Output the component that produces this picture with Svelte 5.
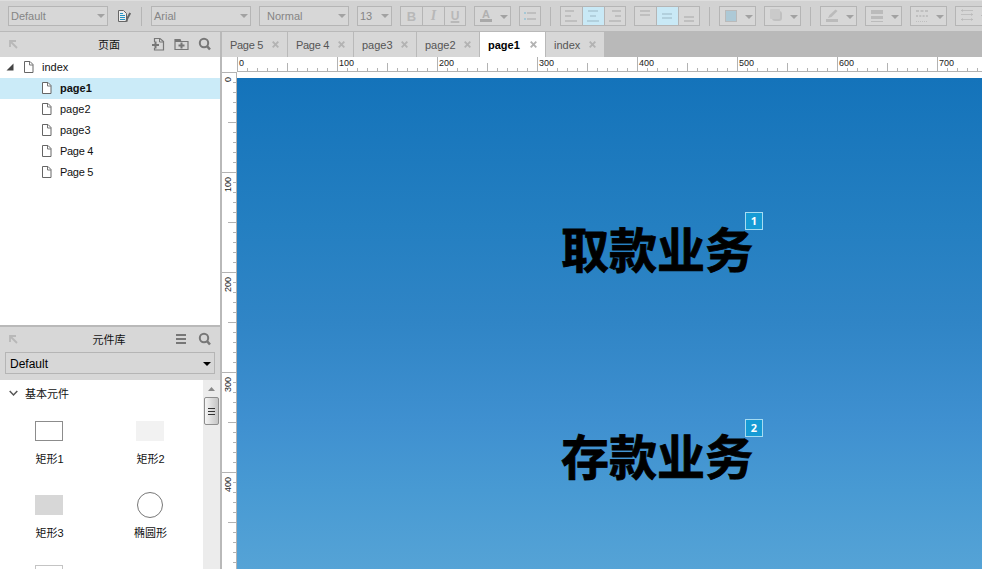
<script>
  const pages = ['page1', 'page2', 'page3', 'Page 4', 'Page 5'];
  const tabs = [
    { name: 'Page 5', width: 66 },
    { name: 'Page 4', width: 66 },
    { name: 'page3', width: 63 },
    { name: 'page2', width: 63 },
    { name: 'page1', width: 66, active: true },
    { name: 'index', width: 58 }
  ];
  const shapes = [
    { name: '矩形1', kind: 'outline' },
    { name: '矩形2', kind: 'light' },
    { name: '矩形3', kind: 'gray' },
    { name: '椭圆形', kind: 'circle' }
  ];
  const xTicks = Array.from({ length: 75 }, (_, i) => i);
  const yTicks = Array.from({ length: 50 }, (_, i) => i);
  const tickLength = (i) => (i % 10 === 0 ? 15 : i % 5 === 0 ? 9 : 4);
</script>

{#snippet pageIcon()}
  <svg class="file" width="10" height="12" viewBox="0 0 10 12">
    <path d="M.5 .5H6L9 3.5V11.5H.5Z" fill="#fff" stroke="#666" />
    <path d="M5.5 .5V4H9" fill="none" stroke="#777" />
  </svg>
{/snippet}

{#snippet search()}
  <svg width="14" height="14" viewBox="0 0 14 14">
    <circle cx="6" cy="6" r="4.2" fill="none" stroke="#777" stroke-width="2" />
    <path d="M9 9.2L12 12.5" stroke="#777" stroke-width="2.5" />
  </svg>
{/snippet}

{#snippet collapse()}
  <svg class="collapse" width="9" height="9" viewBox="0 0 9 9">
    <path d="M1 7V1H7M1.5 1.5L8 8" fill="none" stroke="#b8b8b8" stroke-width="1.8" />
  </svg>
{/snippet}

{#snippet arrow()}
  <svg class="arrow" width="8" height="4" viewBox="0 0 8 4"><path d="M0 0H8L4 4Z" /></svg>
{/snippet}

<div class="app">
  <div class="toolbar">
    <div class="box select w100">Default{@render arrow()}</div>
    <svg class="style-icon" width="15" height="14" viewBox="0 0 15 14">
      <path d="M1.500 1.500H6.5L9.5 4.500V12.5H1.500Z" fill="#eee" stroke="#666" />
      <path d="M3 4.5H6M3 6.5H8M3 8.5H8M3 10.5H8" stroke="#2494c4" />
      <path d="M13.200 4L10 10L9.500 12.5" fill="none" stroke="#666" stroke-width="2" />
    </svg>
    <i class="sep"></i>
    <div class="box select w100">Arial{@render arrow()}</div>
    <div class="box select w90">Normal{@render arrow()}</div>
    <div class="box select w35">13{@render arrow()}</div>
    <div class="box group letters">
      <span class="bold">B</span><span class="italic">I</span><span class="under">U</span>
    </div>
    <div class="box drop">
      <svg width="37" height="20">
        <text x="12" y="12" text-anchor="middle" font-size="11" font-weight="bold" fill="#b0b0b0">A</text>
        <path d="M6 13H18V16H6Z" class="dark" />
      </svg>
      {@render arrow()}
    </div>
    <div class="box w22">
      <svg width="22" height="20">
        <path d="M8 7H17M8 13H17" />
        <path d="M5 7H7M5 13H7" class="dots" />
      </svg>
    </div>
    <i class="sep"></i>
    <div class="box group">
      <span><svg width="21" height="18"><path d="M4 4H13M4 9H10M4 14H16" /></svg></span>
      <span class="on"><svg width="21" height="18"><path d="M5 4H15M7 9H13M4 14H16" /></svg></span>
      <span><svg width="20" height="18"><path d="M7 4H16M10 9H16M4 14H16" /></svg></span>
    </div>
    <div class="box group">
      <span><svg width="21" height="18"><path d="M5 4H15M5 8H15" /></svg></span>
      <span class="on"><svg width="21" height="18"><path d="M5 7H15M5 11H15" /></svg></span>
      <span><svg width="20" height="18"><path d="M5 10H15M5 14H15" /></svg></span>
    </div>
    <i class="sep"></i>
    <div class="box drop">
      <svg width="37" height="20"><rect x="6.500" y="4.500" width="11" height="11" fill="#adc9d6" stroke="#bababa" /></svg>
      {@render arrow()}
    </div>
    <div class="box drop">
      <svg width="37" height="20">
        <rect x="8" y="5" width="10" height="10" rx="3" fill="#c0c0c0" />
        <rect x="6" y="3" width="10" height="10" rx="1" fill="#cacaca" />
      </svg>
      {@render arrow()}
    </div>
    <i class="sep"></i>
    <div class="box drop">
      <svg width="37" height="20">
        <path d="M6 13H18V16H6Z" class="fill" />
        <path d="M8 12L9.500 9L15.500 3.500L17.500 5L11.500 11Z" class="fill" />
      </svg>
      {@render arrow()}
    </div>
    <div class="box drop">
      <svg width="37" height="20"><path d="M6 4H18V8H6ZM6 10H18V13H6ZM6 15H18V16H6Z" class="fill" /></svg>
      {@render arrow()}
    </div>
    <div class="box drop">
      <svg width="37" height="20">
        <path d="M6 5H18" stroke-dasharray="3 1.500" />
        <path d="M6 10H18" stroke-dasharray="2 1.300" />
        <path d="M6 15.500H18" class="thin" stroke-dasharray="1 1" />
      </svg>
      {@render arrow()}
    </div>
    <div class="box drop">
      <svg width="37" height="20">
        <path d="M6 4.500H18M6 8.500H18M6 13.500H18" class="thin" />
        <path d="M6 4.500L8 3V6ZM18 8.500L16 7V10ZM6 13.500L8 12V15ZM18 13.500L16 12V15Z" class="fill" />
      </svg>
      {@render arrow()}
    </div>
  </div>

  <div class="body">
    <aside>
      <header>
        {@render collapse()}
        <span>页面</span>
        <div class="tools">
          <svg width="14" height="14" viewBox="0 0 14 14">
            <path d="M3.500 5V1.500H9L12.500 4.500V13H3.500V11" fill="none" stroke="#777" stroke-width="1.200" />
            <path d="M8.500 1.500V5H12" fill="none" stroke="#777" />
            <path d="M1 8H8M4.500 4.500V11.500" fill="none" stroke="#777" stroke-width="2" />
          </svg>
          <svg width="15" height="14" viewBox="0 0 15 14">
            <path d="M1 12.500V2.500H6L7 4.500H14V12.500Z" fill="none" stroke="#777" stroke-width="1.200" />
            <path d="M1 2H6L7.500 5H1Z" fill="#777" />
            <path d="M4.500 8.500H10.500M7.500 5.500V11.500" stroke="#777" stroke-width="2" />
          </svg>
          {@render search()}
        </div>
      </header>
      <div class="tree">
        <div class="row root">
          <svg class="twist" width="8" height="8" viewBox="0 0 8 8"><path d="M7.500 .5V7.500H.5Z" fill="#444" /></svg>
          {@render pageIcon()}
          <span>index</span>
        </div>
        {#each pages as page}
          <div class="row" class:selected={page === 'page1'}>
            {@render pageIcon()}
            <span class:tight={page.startsWith('P')}>{page}</span>
          </div>
        {/each}
      </div>
      <section class="library">
        <header>
          {@render collapse()}
          <span>元件库</span>
          <div class="tools menu">
            <svg width="12" height="14" viewBox="0 0 12 14"><path d="M1 3H11M1 7H11M1 11H11" stroke="#777" stroke-width="2" /></svg>
            {@render search()}
          </div>
        </header>
        <div class="picker">
          Default
          <svg width="8" height="4" viewBox="0 0 8 4"><path d="M0 0H8L4 4Z" fill="#000" /></svg>
        </div>
        <div class="widgets">
          <div class="content">
            <h3>
              <svg width="9" height="7" viewBox="0 0 9 7"><path d="M.7 1L4.500 5L8.300 1" fill="none" stroke="#555" stroke-width="1.500" /></svg>
              <span>基本元件</span>
            </h3>
            <div class="shapes">
              {#each shapes as shape}
                <div class="shape">
                  <div class="preview"><i class={shape.kind}></i></div>
                  <span>{shape.name}</span>
                </div>
              {/each}
              <div class="shape"><div class="preview"><i class="outline image"></i></div></div>
            </div>
          </div>
          <div class="scroll">
            <svg width="7" height="4" viewBox="0 0 7 4"><path d="M0 4H7L3.500 0Z" fill="#888" /></svg>
            <div class="thumb"><i></i><i></i><i></i></div>
          </div>
        </div>
      </section>
    </aside>

    <main>
      <nav>
        {#each tabs as tab}
          <div class="tab" class:active={tab.active} style="width:{tab.width}px">
            <span class:tight={tab.name.startsWith('P')}>{tab.name}</span>
            <svg width="7" height="7" viewBox="0 0 7 7"><path d="M.7 .7L6.300 6.300M6.300 .7L.7 6.300" stroke="#b3b3b3" stroke-width="1.900" /></svg>
          </div>
        {/each}
      </nav>
      <svg class="ruler" width="760" height="15">
        {#each xTicks as i}
          <path d="M{15.5 + i * 10} {15 - tickLength(i)}V15" />
          {#if i % 10 === 0}<text x={17 + i * 10} y="9">{i * 10}</text>{/if}
        {/each}
        <path d="M15 14.500H760" />
      </svg>
      <div class="stage">
        <svg class="ruler" width="15" height="497">
          {#each yTicks as i}
            <path d="M{15 - tickLength(i)} {i * 10 + 0.5}H15" />
            {#if i % 10 === 0}
              <text transform="translate(9 {i * 10 + (i ? 20 : 10)}) rotate(-90)">{i * 10}</text>
            {/if}
          {/each}
          <path d="M14.500 0V497" />
        </svg>
        <div class="canvas">
          <div class="label first">取款业务<b>1</b></div>
          <div class="label second">存款业务<b>2</b></div>
        </div>
      </div>
    </main>
  </div>
</div>

<style>
  .app {
    width: 982px;
    height: 569px;
    overflow: hidden;
    display: flex;
    flex-direction: column;
    background: #fff;
    color: #111;
    font: 11px 'Liberation Sans', 'Noto Sans CJK SC', sans-serif;
  }
  * { box-sizing: border-box; }
  svg { display: block; flex: none; }
  .toolbar {
    display: flex;
    align-items: center;
    gap: 8px;
    flex: none;
    height: 32px;
    width: 1010px;
    padding-left: 8px;
    background: #d2d2d2;
    border-bottom: 1px solid #b9b9b9;
    border-top: 1px solid #dedede;
  }
  .box {
    flex: none;
    height: 20px;
    border: 1px solid #b5b5b5;
    background: #d7d7d7;
    display: flex;
    align-items: center;
    color: #858585;
  }
  .drop > svg:not(.arrow), .w22 > svg { margin: -1px; }
  .box path { stroke: #bfbfbf; stroke-width: 2; fill: none; }
  .box .on path { stroke: #b2d0dd; }
  .box .arrow path { fill: #a2a2a2; stroke: none; }
  .box path.fill { fill: #bbb; stroke: none; }
  .box path.dark { fill: #a9a9a9; stroke: none; }
  .box path.dots { stroke: #a5c8d6; }
  .box path.thin { stroke-width: 1; }
  .select { padding: 0 2px; justify-content: space-between; }
  .w100 { width: 100px; }
  .w90 { width: 90px; padding-left: 7px; }
  .w35 { width: 35px; }
  .w22 { width: 22px; }
  .style-icon { margin: 0 -6px 0 1px; }
  .sep { width: 1px; height: 19px; margin: 0 1px; background: #b5b5b5; }
  .style-icon + .sep { margin-left: 7px; }
  .group span {
    width: 22px;
    height: 18px;
    border-right: 1px solid #b5b5b5;
    display: flex;
    align-items: center;
    overflow: hidden;
  }
  .letters span { justify-content: center; font-size: 13px; color: #b8b8b8; }
  .group span:last-child { border: 0; width: 20px; }
  .on { background: #c9e9f6; }
  .bold { font-weight: bold; }
  .group .italic { font: italic bold 14px 'Liberation Serif', serif; }
  .group .under { font-size: 12px; font-weight: bold; text-decoration: underline 2px; text-underline-offset: 1px; }
  .drop { width: 37px; position: relative; }
  .drop .arrow { position: absolute; right: 2px; top: 8px; }
  .body { display: flex; flex: 1; min-height: 0; }
  aside {
    width: 222px;
    flex: none;
    border-right: 2px solid #b9b9b9;
    display: flex;
    flex-direction: column;
  }
  header {
    display: flex;
    align-items: center;
    justify-content: center;
    position: relative;
    height: 25px;
    flex: none;
    background: #d7d7d7;
    padding-bottom: 2px;
  }
  header > span { margin-right: 2px; }
  .collapse { position: absolute; left: 9px; top: 8px; }
  .tools { position: absolute; right: 8px; top: 5px; display: flex; gap: 9px; align-items: center; }
  .menu { gap: 11px; }
  .tree { height: 268px; }
  .row { height: 21px; display: flex; align-items: center; padding-left: 42px; gap: 8px; }
  .row span { padding-bottom: 2px; }
  .row.root { padding-left: 6px; }
  .root .file { margin-left: 2px; }
  .file { margin-top: -1px; }
  .twist { margin-top: -1px; }
  .selected { background: #cbebf8; font-weight: bold; }
  .tight { letter-spacing: -0.3px; }
  .library {
    flex: 1;
    display: flex;
    flex-direction: column;
    border-top: 2px solid #b9b9b9;
    background: #d7d7d7;
    min-height: 0;
  }
  .picker {
    flex: none;
    height: 22px;
    margin: 0 5px 6px;
    padding: 2px 3px 0 4px;
    border: 1px solid #b5b5b5;
    display: flex;
    align-items: center;
    justify-content: space-between;
    font-size: 12px;
    color: #000;
  }
  .widgets { flex: 1; display: flex; background: #fff; overflow: hidden; min-height: 0; }
  .content { width: 203px; }
  h3 { margin: 0; height: 27px; display: flex; align-items: center; gap: 7px; padding-left: 9px; font: inherit; }
  h3 span { padding-bottom: 2px; }
  .shapes { display: grid; grid-template-columns: 101px 101px; grid-auto-rows: 74px; padding-top: 9px; }
  .shape { display: flex; flex-direction: column; align-items: center; margin-left: -3px; }
  .preview { height: 30px; display: flex; align-items: center; }
  .shape span { margin: 5px 0 0 1px; line-height: 16px; }
  .preview i { width: 28px; height: 20px; }
  .outline { border: 1px solid #8c8c8c; }
  .preview .image { height: 28px; border-color: #c4c4c4; }
  .light { background: #f2f2f2; }
  .gray { background: #d7d7d7; }
  .preview .circle { width: 26px; height: 26px; border: 1px solid #777; border-radius: 50%; }
  .scroll { width: 17px; background: #ececec; display: flex; flex-direction: column; align-items: center; padding-top: 7px; gap: 6px; }
  .thumb {
    width: 15px;
    height: 28px;
    flex: none;
    border: 1px solid #8e8e8e;
    border-radius: 2px;
    background: linear-gradient(90deg, #f5f5f5, #dcdcdc 50%, #c5c5c5);
    display: flex;
    flex-direction: column;
    justify-content: center;
    align-items: center;
    gap: 2px;
  }
  .thumb i { width: 7px; height: 1px; background: #333; }
  main { flex: 1; min-width: 0; display: flex; flex-direction: column; }
  nav { height: 25px; flex: none; display: flex; background: #b9b9b9; }
  .tab {
    flex: none;
    display: flex;
    align-items: center;
    justify-content: space-between;
    padding: 0 8px;
    background: #d7d7d7;
    border-right: 1px solid #b9b9b9;
    color: #555;
  }
  .tab span { padding-top: 1px; }
  .tab:last-child { border: 0; }
  .active { background: #fff; color: #000; font-weight: bold; }
  .ruler path { stroke: #b3b3b3; fill: none; }
  .ruler text { font-size: 9px; fill: #222; }
  .stage { display: flex; flex: 1; min-height: 0; }
  .canvas {
    position: relative;
    flex: 1;
    margin-top: 6px;
    background: linear-gradient(#1473ba, #247fc1 30%, #3085c6 50%, #3f90d0 70%, #489ad3 84%, #55a3d6);
  }
  .label {
    position: absolute;
    left: 324px;
    font: bold 48px/56px 'Noto Sans CJK SC', sans-serif;
    color: #000;
    white-space: nowrap;
    -webkit-text-stroke: 0.8px #000;
  }
  .first { top: 141px; }
  .second { top: 348px; }
  .label b {
    position: absolute;
    left: 184px;
    top: -7px;
    width: 18px;
    height: 18px;
    border: 1px solid #a5dcf2;
    background: #169bd5;
    color: #fff;
    text-align: center;
    font: bold 11px/16px 'Open Sans', sans-serif;
    -webkit-text-stroke: 0;
  }
</style>
